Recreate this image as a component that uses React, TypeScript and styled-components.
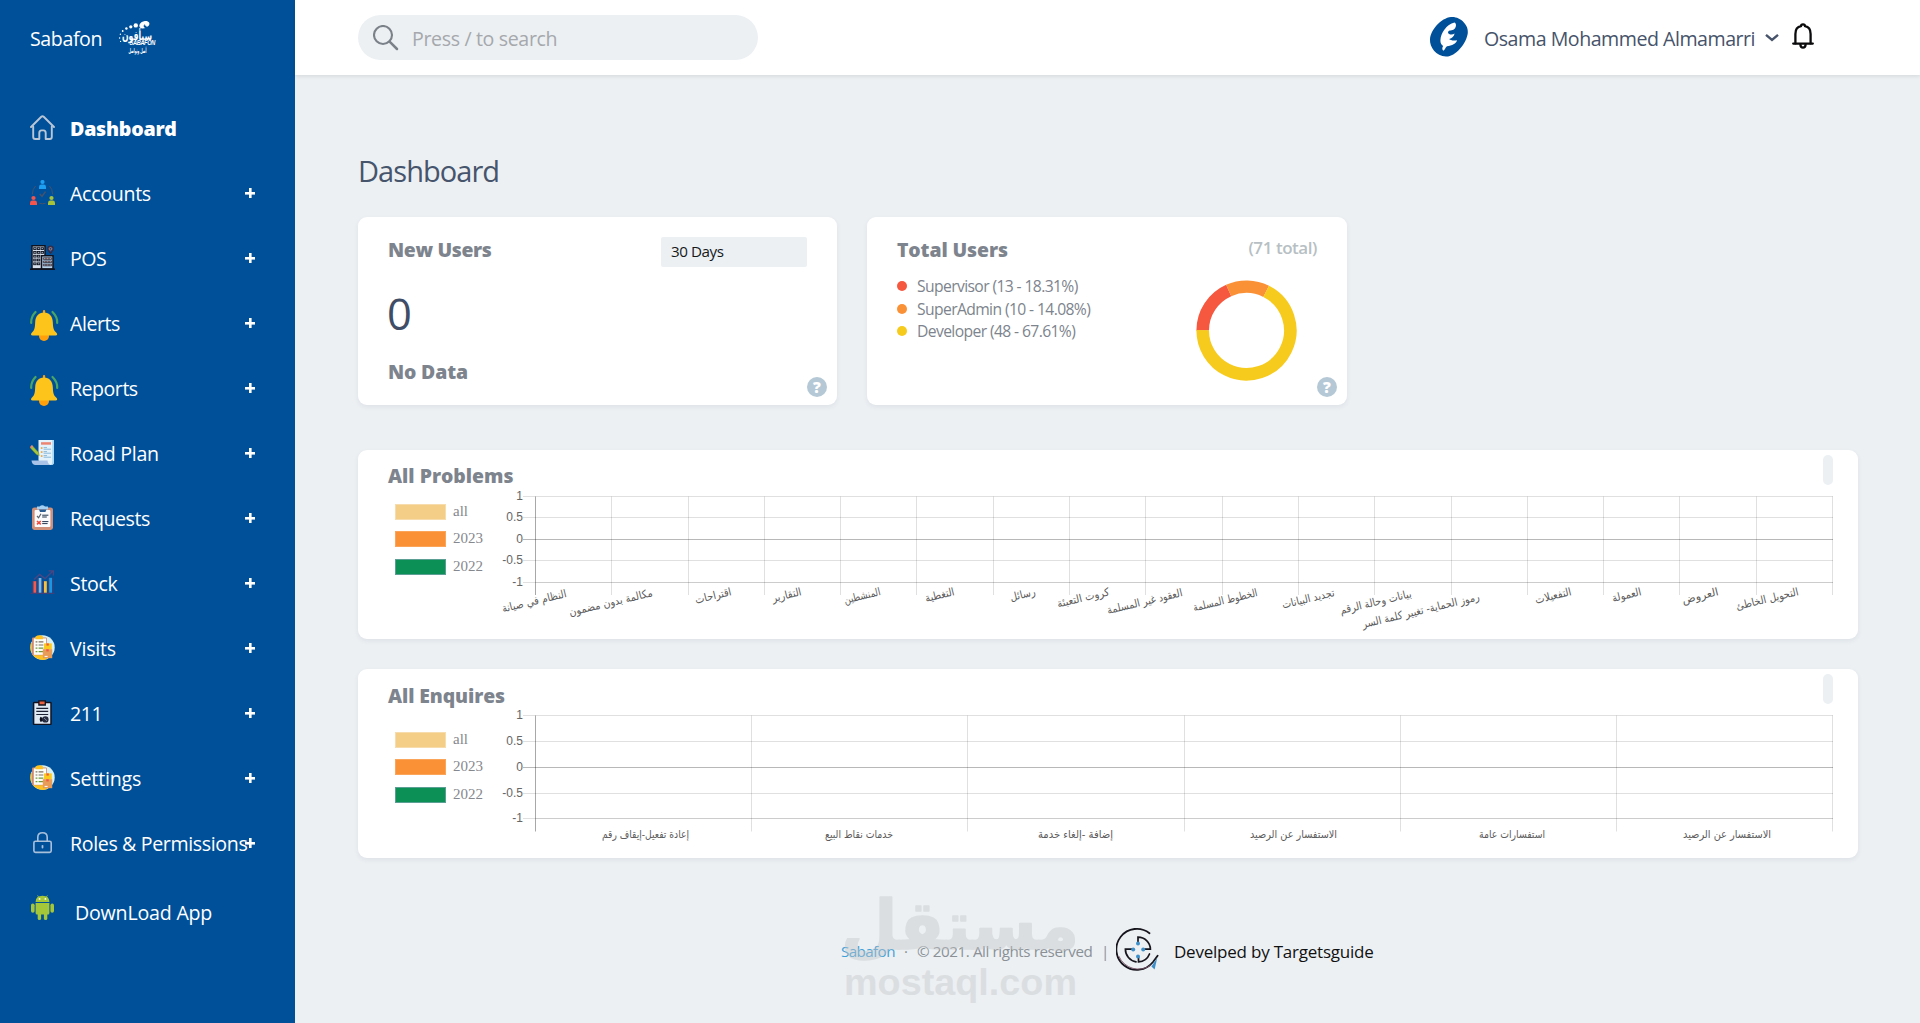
import React from "react";
import styled, { createGlobalStyle } from "styled-components";

const GlobalStyle = createGlobalStyle`
  *, *::before { box-sizing: border-box; }
  body { margin: 0; background: #ecf0f3; font-family: "Open Sans", "Noto Sans", sans-serif; }
`;

/* ---------- shell ---------- */

const Shell = styled.div`
  display: flex;
  width: 1920px;
  height: 1023px;
  overflow: hidden;
  background: #ecf0f3;
`;

const Sidebar = styled.aside`
  width: 295px;
  flex: none;
  background: #005099;
  color: #fff;
  padding: 0 40px 0 30px;
`;

const Brand = styled.div`
  display: flex;
  height: 115px;
  padding-top: 18px;
  gap: 16px;
  font-size: 19.6px;
  line-height: 42px;
  letter-spacing: -0.4px;
  svg { overflow: visible; }
`;

const Menu = styled.nav`
  display: flex;
  flex-direction: column;
  gap: 40px;
`;

const MenuRow = styled.a`
  display: flex;
  align-items: flex-start;
  height: 25px;
  color: #fff;
`;

const IconSlot = styled.span`
  flex: none;
  width: 40px;
  height: 25px;
  svg { display: block; }
`;

const MenuLabel = styled.span<{ $track?: number; $strong?: boolean; $shift?: boolean }>`
  flex: 1;
  min-width: 0;
  white-space: nowrap;
  font-size: 19.6px;
  font-weight: ${(p) => (p.$strong ? 800 : 400)};
  line-height: ${(p) => (p.$strong ? 28 : 27)}px;
  letter-spacing: ${(p) => p.$track ?? -0.4}px;
  padding: ${(p) => (p.$shift ? "4px 0 0 5px" : "0")};
`;

const PlusMark = styled.span`
  flex: none;
  width: 10px;
  height: 10px;
  margin-top: 8px;
  background:
    linear-gradient(#fff, #fff) center / 10px 2.6px no-repeat,
    linear-gradient(#fff, #fff) center / 2.6px 10px no-repeat;
`;

const Main = styled.div`
  flex: 1;
  display: flex;
  flex-direction: column;
`;

const TopBar = styled.header`
  display: flex;
  align-items: flex-start;
  height: 75px;
  flex: none;
  padding: 15px 106px 0 63px;
  background: #fff;
  box-shadow: 0 1px 4px rgba(30, 30, 30, 0.12);
`;

const SearchBox = styled.label`
  display: flex;
  width: 400px;
  height: 45px;
  border-radius: 23px;
  background: #ecf0f3;
  padding: 10px 15px;
  gap: 13px;
`;

const SearchInput = styled.input`
  border: 0;
  background: none;
  outline: 0;
  padding: 0;
  margin-top: 1px;
  width: 300px;
  height: 26px;
  font: 400 19.6px/26px "Open Sans", sans-serif;
  letter-spacing: -0.36px;
  &::placeholder { color: #a5a8ac; opacity: 1; }
`;

const Account = styled.div`
  display: flex;
  align-items: flex-start;
  margin-left: auto;
  svg { display: block; }
`;

const AvatarSlot = styled.span`
  padding-top: 1px;
`;

const AccountName = styled.span`
  width: 270px;
  margin: 10px 11px 0 15px;
  color: #46536a;
  font-size: 19.6px;
  line-height: 28px;
  letter-spacing: -0.48px;
  white-space: nowrap;
`;

const BellSlot = styled.span`
  margin-left: 13px;
  padding-top: 8px;
`;

const ChevronSlot = styled.span`
  padding-top: 18px;
`;

/* ---------- content ---------- */

const Content = styled.main`
  display: flex;
  flex-direction: column;
  padding: 75px 62px 0 63px;
`;

const PageTitle = styled.h1`
  margin: 0;
  height: 67px;
  color: #46546c;
  font-size: 29px;
  font-weight: 400;
  line-height: 42px;
  letter-spacing: -0.95px;
`;

const StatRow = styled.section`
  display: grid;
  grid-template-columns: 479px 480px;
  gap: 30px;
  margin-bottom: 45px;
`;

const Card = styled.article`
  position: relative;
  height: 188px;
  border-radius: 9px;
  background: #fff;
  box-shadow: 0 2px 5px rgba(40, 60, 80, 0.07);
`;

const StatCard = styled(Card)`
  padding: 20px 30px;
`;

const CardHead = styled.div`
  display: flex;
  justify-content: space-between;
  align-items: flex-start;
`;

const CardTitle = styled.h2<{ $track?: number }>`
  margin: 0;
  color: #7d848d;
  font-size: 19.4px;
  font-weight: 800;
  line-height: 26px;
  letter-spacing: ${(p) => p.$track ?? -0.3}px;
  white-space: nowrap;
`;

const PeriodSelect = styled.div`
  width: 146px;
  height: 30px;
  border-radius: 2px;
  background: #ecf0f3;
  padding-left: 10px;
  color: #16181c;
  font-size: 15.2px;
  line-height: 29px;
  letter-spacing: -0.45px;
`;

const BigNumber = styled.div`
  height: 60px;
  margin: 20px 0 12px;
  color: #3f4d66;
  font-size: 43.5px;
  font-weight: 400;
  line-height: 54px;
  text-indent: -1px;
`;

const HelpBadge = styled.span`
  position: absolute;
  right: 10px;
  bottom: 8px;
  width: 20px;
  height: 20px;
  border-radius: 50%;
  background: #b5c8d6;
  color: #fff;
  font-size: 15.5px;
  font-weight: 800;
  line-height: 20px;
  text-align: center;
`;

const TotalNote = styled.span`
  margin: -2px 0 0;
  color: #b7bfc4;
  font-size: 17px;
  font-weight: 600;
  line-height: 26px;
  letter-spacing: -0.45px;
`;

const TotalBody = styled.div`
  display: flex;
  justify-content: space-between;
`;

const RoleList = styled.ul`
  list-style: none;
  margin: 12px 0 0;
  padding: 0;
`;

const RoleItem = styled.li<{ $color: string }>`
  display: flex;
  align-items: center;
  gap: 10px;
  height: 22.5px;
  color: #7d848d;
  font-size: 15.7px;
  letter-spacing: -0.62px;
  white-space: nowrap;
  &::before {
    content: "";
    width: 10px;
    height: 10px;
    border-radius: 50%;
    background: ${(p) => p.$color};
  }
`;

const DonutSlot = styled.div`
  margin: 17px 20px 0 0;
  svg { display: block; }
`;

const ChartCard = styled(Card)`
  height: 189px;
  margin-bottom: 30px;
  padding-left: 30px;
`;

const ChartHead = styled.div<{ $drop: number }>`
  display: flex;
  justify-content: space-between;
  height: 38px;
  padding: 5px 25px 0 0;
  h2 { padding-top: ${(p) => 8 + p.$drop}px; }
`;

const Pill = styled.span`
  width: 10px;
  height: 30px;
  border-radius: 5px;
  background: #ecf0f3;
`;

const ChartBody = styled.div`
  display: flex;
  svg { display: block; }
`;

const Legend = styled.ul<{ $top: number }>`
  list-style: none;
  width: 103px;
  margin: 0;
  padding: ${(p) => p.$top}px 0 0 7px;
`;

const LegendItem = styled.li<{ $color: string; $edge: string }>`
  display: flex;
  align-items: center;
  gap: 7px;
  height: 27.5px;
  color: #85888e;
  font: 15px/16px "Liberation Serif", serif;
  &::before {
    content: "";
    width: 51px;
    height: 16px;
    background: ${(p) => p.$color};
    border: 1px solid ${(p) => p.$edge};
  }
  span { margin-top: -2px; }
`;

/* ---------- footer ---------- */

const Footer = styled.footer`
  position: relative;
  display: flex;
  align-items: center;
  height: 46px;
  margin: 38px 0 0 483px;
  font-size: 15.2px;
  color: #8a9096;
  white-space: nowrap;
  > a, > span { padding-top: 4px; }
`;

const FooterBrand = styled.a`
  width: 54px;
  color: #3f9fd8;
  letter-spacing: -0.6px;
`;

const FooterDot = styled.span`
  width: 22px;
  text-align: center;
`;

const FooterText = styled.span`
  width: 184px;
  letter-spacing: -0.42px;
`;

const FooterBar = styled.span`
  width: 15px;
`;

const FooterCredit = styled.span`
  margin-left: 14px;
  color: #111;
  font-size: 17px;
  letter-spacing: -0.22px;
`;

const Watermark = styled.div`
  position: absolute;
  left: -20px;
  top: -66px;
  pointer-events: none;
  svg { display: block; overflow: visible; }
`;

/* ---------- icons ---------- */

const HomeIcon = () => (
  <svg width="25" height="25" viewBox="0 0 25 25" fill="none" stroke="#b9c6d6" strokeWidth="1.9" strokeLinecap="round" strokeLinejoin="round">
    <path d="M1 12 L11.3 1.8 Q12.5 .7 13.7 1.8 L24 12" />
    <path d="M3.2 11.5 V22 Q3.2 24 5.2 24 H9.3 V18 Q9.3 15.4 11.5 15.4 H13.5 Q15.7 15.4 15.7 18 V24 H19.8 Q21.8 24 21.8 22 V11.5" />
  </svg>
);

const Person = ({ x, y, color }: { x: number; y: number; color: string }) => (
  <g fill={color} transform={`translate(${x} ${y})`}>
    <circle cx="3.5" cy="2" r="2.1" />
    <path d="M0 9 V7 Q0 4.6 2.4 4.6 H4.6 Q7 4.6 7 7 V9 Z" />
  </g>
);

const AccountsIcon = () => (
  <svg width="25" height="25" viewBox="0 0 25 25">
    <Person x={9} y={0} color="#1ea0f2" />
    <Person x={0} y={16} color="#f4544c" />
    <Person x={18} y={16} color="#a6c23a" />
    <g fill="none" stroke="#46536b" strokeWidth="1">
      <path d="M5.5 6 Q2.5 9 2.3 14.5 M19.5 6 Q22.5 9 22.7 14.5 M9.5 23.3 Q12.5 24.3 15.5 23.3" />
      <path d="M9.8 14 L12 16.4 L15.5 11.6" strokeWidth="1.5" />
    </g>
  </svg>
);

const BuildingIcon = () => (
  <svg width="25" height="25" viewBox="0 0 25 25">
    <path d="M2 .8 H15 V24 H2 Z" fill="#d5deea" stroke="#10131f" strokeWidth="1.5" />
    <path d="M11.5 10.8 H23 V24 H11.5 Z" fill="#b8d2ea" stroke="#10131f" strokeWidth="1.5" />
    {[2.7, 6.5, 10.3, 14.1, 17.9].map((y) => (
      <g key={y} fill="#a9b9cd" stroke="#10131f" strokeWidth=".9">
        <rect x="3.7" y={y} width="2.4" height="1.8" />
        <rect x="7.4" y={y} width="2.4" height="1.8" />
        {y < 10 && <rect x="11.1" y={y} width="2.4" height="1.8" />}
      </g>
    ))}
    {[12.8, 16, 19.2].map((y) => (
      <path key={y} d={`M13.3 ${y} h8.4 v1.6 h-8.4 z M16 ${y} v1.6 M19 ${y} v1.6`} fill="#e9c3bd" stroke="#222738" strokeWidth=".8" />
    ))}
    <path d="M0 24.2 H25" stroke="#10131f" strokeWidth="1.6" />
    <path d="M20.5 8.3 L18 5 Q16.9 1.2 20.5 1 Q24.1 1.2 23 5 Z" fill="#23458a" stroke="#3a2a3c" strokeWidth="1.2" />
    <circle cx="20.5" cy="3.8" r="1.3" fill="#005099" stroke="#d07a4c" strokeWidth=".9" />
  </svg>
);

const RingingBell = () => (
  <svg width="29" height="31" viewBox="0 0 29 31">
    <path d="M5.5 2 Q.8 7 1.2 13" fill="none" stroke="#4aa564" strokeWidth="2.2" strokeLinecap="round" />
    <path d="M22.5 2 Q27.6 7 27.2 13" fill="none" stroke="#4aa564" strokeWidth="2.2" strokeLinecap="round" />
    <circle cx="14" cy="26" r="5" fill="#ff9f0a" />
    <rect x="12.9" y="0" width="2.3" height="4.5" rx="1.1" fill="#ff9f0a" />
    <path d="M14 2.4 C19.5 2.4 22.6 6.2 22.8 12 C23 18 23.7 20.5 26.4 22.7 C27.8 24.2 27.2 25.5 25.6 25.5 H2.6 C1 25.5 .4 24.2 1.8 22.7 C4.4 20.5 5 18 5.2 12 C5.4 6.2 8.5 2.4 14 2.4 Z" fill="#fdc51b" />
  </svg>
);

const PlanIcon = () => (
  <svg width="25" height="25" viewBox="0 0 25 25">
    <path d="M8.5 0 H24 V22 Q24 25 21 25 H10 L8.5 20 Z" fill="#e4f3fb" />
    <path d="M22.2 0 H24 V22 Q24 25 21 25 Q22.2 24 22.2 21 Z" fill="#a9d8f5" />
    <path d="M1.5 20.5 H17.5 Q17.8 24.2 21 25 H5 Q2 24.5 1.5 20.5 Z" fill="#a9c3e8" />
    <path d="M11 2.2 H21 V4.7 H11 Z" fill="#ec8472" />
    {[8, 12, 16].map((y) => (
      <g key={y}>
        <rect x="10.8" y={y - 0.8} width="1.7" height="1.7" fill="#f0a23d" />
        <path d={`M13.6 ${y - 0.4} H17 M13.6 ${y + 1.2} H21`} stroke="#7fb2d6" strokeWidth=".9" />
      </g>
    ))}
    <path d="M2.2 5.6 L8.6 12.6 L9.2 15.6 L6.4 14.6 L.2 7.8 Z" fill="#a4c43b" stroke="#6c8f35" strokeWidth=".5" />
    <path d="M1.8 5 L3.2 6.6 L1.4 8.6 L0 7 Z" fill="#ec8472" />
  </svg>
);

const RequestsIcon = () => (
  <svg width="25" height="25" viewBox="0 0 25 25">
    <rect x="2" y="2.4" width="21" height="22.6" rx="2.4" fill="#d08f78" />
    <rect x="4.6" y="5" width="15.8" height="17" rx="1" fill="#fbfbfd" />
    <path d="M7 1.4 H9.5 Q12.3 -1 15 1.4 H18 V4.5 H7 Z" fill="#a5d0f4" />
    <path d="M9 4.6 H16.5 L15.4 7 H10 Z" fill="#2c5d92" />
    <path d="M7 11 L8.6 12.8 L11 8.8" fill="none" stroke="#5c636e" strokeWidth="1.2" />
    <path d="M7 16 L10.8 19.4 M10.8 16 L7 19.4" stroke="#ee4b3e" strokeWidth="1.6" />
    <path d="M12.2 10.2 H18.4 M12.2 12 H16.8 M12.2 16.6 H18.4 M12.2 18.6 H17.6" stroke="#23364f" strokeWidth="1" />
  </svg>
);

const StockIcon = () => (
  <svg width="25" height="25" viewBox="0 0 25 25">
    <rect x="3.4" y="11.2" width="2.8" height="11.6" fill="#f3594c" />
    <rect x="8.6" y="8" width="2.8" height="14.8" fill="#7eb6e6" />
    <rect x="14" y="11.2" width="2.8" height="11.6" fill="#fbc13a" />
    <rect x="19.2" y="7.8" width="2.8" height="15" fill="#1698e6" />
    <path d="M.5 23.4 H24.5 M2.6 23 V11 M7.8 23 V8 M13.2 23 V11 M18.4 23 V8 M22.8 23 V8" stroke="#473f76" strokeWidth="1" fill="none" />
    <path d="M4 9.6 L9.6 4.4 L15 8.6 L23 1 M18.6 .9 H23.4 V5.4" fill="none" stroke="#4a4682" strokeWidth="1.3" />
  </svg>
);

const VisitsIcon = () => (
  <svg width="25" height="25" viewBox="0 0 25 25">
    <circle cx="12.5" cy="12.5" r="12.2" fill="#d6f0f5" />
    <path d="M1 8 Q-1 19 7 23.5 Q12 26 17.5 24 L15 8 Z" fill="#fbc220" />
    <rect x="2" y="2.4" width="14.8" height="17.8" rx="1" fill="#d0896e" />
    <rect x="3.8" y="3.4" width="12.2" height="16.4" fill="#fdfdf8" />
    <path d="M5.5 1.4 Q9.3 -1 13 1.4 V4.2 H5.5 Z" fill="#fbc220" />
    {[6.8, 10, 13.2, 16.6].map((y) => (
      <path key={y} d={`M5.6 ${y} H7.4 M8.6 ${y} H13.4`} stroke={y > 12 ? "#6f9838" : "#7d7160"} strokeWidth="1.2" />
    ))}
    <rect x="14" y="8.4" width="7.8" height="6.2" fill="#fccb20" />
    <path d="M16.4 8.4 h2.4 v2.2 h-2.4 z" fill="#f0583e" />
    <rect x="12.8" y="14.2" width="9.4" height="9" fill="#e99b58" />
    <path d="M16.3 14.2 h2.4 v2.2 h-2.4 z" fill="#f0583e" />
    <path d="M14.6 21.4 h3" stroke="#fff" strokeWidth="1" />
  </svg>
);

const ClipboardIcon = () => (
  <svg width="25" height="25" viewBox="0 0 25 25">
    <rect x="3.6" y="2.6" width="17.4" height="21.8" rx=".6" fill="#dfe9f4" stroke="#10131f" strokeWidth="1.5" />
    <path d="M8.9 .8 H15.3 V5 H8.9 Z" fill="#e8603f" stroke="#10131f" strokeWidth="1.3" />
    <path d="M6.3 8.3 H18.2 M6.3 11.4 H18.2 M6.3 14.5 H18.2" stroke="#1c2233" strokeWidth="1.2" />
    <path d="M10.6 16.8 Q8.8 19.2 10.6 22 L13.2 20.8 L12.6 18 Z" fill="#10131f" />
    <circle cx="15.4" cy="19.4" r="3.2" fill="#262c40" />
    <path d="M14 18 L17 20.8" stroke="#8fa0b8" strokeWidth=".8" />
  </svg>
);

const LockIcon = () => (
  <svg width="25" height="25" viewBox="0 0 25 25" fill="none" stroke="#a9c0da" strokeWidth="1.6" strokeLinecap="round">
    <rect x="3.9" y="11.2" width="17.3" height="11.2" rx="1.6" />
    <path d="M7.8 11 V7.3 Q7.8 2.8 12.5 2.8 Q17.2 2.8 17.2 7.3 V11" />
    <path d="M12.5 15.8 V17.6" strokeWidth="1.8" />
  </svg>
);

const AndroidIcon = () => (
  <svg width="25" height="25" viewBox="0 0 25 25" fill="#a4c639">
    <path d="M5.6 7 Q5.6 .8 12.5 .8 Q19.4 .8 19.4 7 Z" />
    <path d="M7.6 .4 L9 2.6 M17.4 .4 L16 2.6" stroke="#a4c639" strokeWidth=".8" />
    <circle cx="9.6" cy="3.9" r=".9" fill="#fff" />
    <circle cx="15.4" cy="3.9" r=".9" fill="#fff" />
    <path d="M5.6 8 H19.4 V18 Q19.4 19.5 18 19.5 H7 Q5.6 19.5 5.6 18 Z" />
    <rect x="1" y="8.4" width="3.6" height="9.4" rx="1.8" />
    <rect x="20.4" y="8.4" width="3.6" height="9.4" rx="1.8" />
    <rect x="7.7" y="17" width="3.4" height="8" rx="1.6" />
    <rect x="13.9" y="17" width="3.4" height="8" rx="1.6" />
  </svg>
);

const SearchIcon = () => (
  <svg width="26" height="26" viewBox="0 0 26 26" fill="none" stroke="#7b8188" strokeWidth="2.1" strokeLinecap="round">
    <circle cx="10" cy="10" r="9" />
    <path d="M16.6 16.6 L24 24" strokeWidth="2.5" />
  </svg>
);

const BrandMark = () => (
  <svg width="40" height="38" viewBox="0 0 40 38" fill="#fff">
    <path d="M26 3.2 C30 2 33 5 30.6 7.8 C29.2 9.5 27.6 8.8 28.2 7.6 C26.6 8.2 26 6.8 27.5 6 C25.2 6.4 25 9.6 27.6 10 C23 11.4 20.8 9.4 21.4 7 C22 5 23.8 3.8 26 3.2 Z" />
    <circle cx="17.8" cy="7.4" r="2.2" />
    <circle cx="12.8" cy="8.8" r="1.6" />
    <circle cx="8.4" cy="10.5" r="1.2" />
    <circle cx="4.7" cy="13" r=".9" />
    <circle cx="2.4" cy="16.3" r=".7" />
    <circle cx="1.6" cy="20" r=".7" />
    <circle cx="2.6" cy="23.4" r=".6" />
    <text x="4" y="21.5" fontFamily="DejaVu Sans" fontWeight="700" fontSize="12" textLength="30" lengthAdjust="spacingAndGlyphs">سبأفون</text>
    <text x="11.5" y="26.8" fontFamily="Liberation Sans" fontStyle="italic" fontWeight="700" fontSize="6.4" textLength="25.5" lengthAdjust="spacingAndGlyphs">SABAFON</text>
    <text x="10.5" y="34.8" fontFamily="DejaVu Sans" fontWeight="700" fontSize="6.5" textLength="18" lengthAdjust="spacingAndGlyphs">أصل وتواصل</text>
  </svg>
);

const Avatar = () => (
  <svg width="40" height="42" viewBox="0 0 40 42">
    <path d="M22 1 C31 0 40 9 38.8 17 C37.5 28 26 41 17 40.6 C7 40 .5 31 1 23.5 C1.5 14 12 2 22 1 Z" fill="#005099" />
    <path d="M25.5 6.5 C17.5 8.5 11.6 17 11.4 24.2 C11.3 27 12.4 29 14.2 30 C13.2 31.4 12.8 33.2 14.2 34.8 C15.8 34 16.4 31.4 18 30.2 C22.8 29.8 27.4 27.4 28 24.2 C24.6 24.8 21.4 24.4 20.2 23 C23 22.4 25 20.6 25.6 17.6 C23.4 19 19.4 18.8 19 16.4 C19.2 14.2 22 14.8 24.4 13.8 C27.2 12.2 28 7.6 25.5 6.5 Z" fill="#fff" />
  </svg>
);

const ChevronIcon = () => (
  <svg width="14" height="10" viewBox="0 0 14 10" fill="none" stroke="#46536a" strokeWidth="2.4">
    <path d="M1 1.8 L7 7 L13 1.8" />
  </svg>
);

const NotifyIcon = () => (
  <svg width="22" height="27" viewBox="0 0 22 27" fill="none" stroke="#0b0b0d" strokeWidth="2.3" strokeLinecap="round" strokeLinejoin="round">
    <path d="M1.2 20.6 H20.8" />
    <path d="M3.4 20.4 V11 Q3.4 4 9 3.2 Q9 1.4 11 1.4 Q13 1.4 13 3.2 Q18.6 4 18.6 11 V20.4" />
    <path d="M8.4 21.6 Q8.6 24.6 11 24.6 Q13.4 24.6 13.6 21.6" />
  </svg>
);

const TargetMark = () => (
  <svg width="44" height="46" viewBox="0 0 44 46" fill="none" strokeLinecap="round">
    <path d="M33.5 7.2 A20.5 20.5 0 1 0 37 36 L41.6 29.8" stroke="#17151d" strokeWidth="1.8" />
    <path d="M3 30.5 A21 21 0 0 0 35 39" stroke="#7a5468" strokeWidth=".9" />
    <path d="M22 17 V11.2 A12.4 12.4 0 0 1 34.4 23.2 H29" stroke="#17151d" strokeWidth="1.7" />
    <path d="M33.5 28 A12.4 12.4 0 0 1 22.5 35.8 V31 M17 23.2 H9.4 A12.8 12.8 0 0 0 20 35.8" stroke="#17151d" strokeWidth="1.7" />
    <g fill="#3c8fc9">
      <circle cx="22" cy="17.4" r="2" />
      <circle cx="17.2" cy="23.4" r="2" />
      <circle cx="27.2" cy="23.4" r="2" />
      <circle cx="22" cy="30.4" r="2" />
      <path d="M41.2 32 L38.6 43.5 L35.4 40.5 Z" />
    </g>
  </svg>
);

/* ---------- charts ---------- */

const roles = [
  { label: "Supervisor (13 - 18.31%)", share: 13 / 71, color: "#f6573f" },
  { label: "SuperAdmin (10 - 14.08%)", share: 10 / 71, color: "#fb9137" },
  { label: "Developer (48 - 67.61%)", share: 48 / 71, color: "#f6cb1e" },
];

const Donut = () => {
  const r = 43.8;
  const c = 2 * Math.PI * r;
  let offset = 0;
  return (
    <svg width="101" height="101" viewBox="0 0 101 101">
      {roles.map((role) => {
        const start = offset;
        offset += role.share;
        return (
          <circle
            key={role.label}
            cx="50.5"
            cy="50.5"
            r={r}
            fill="none"
            stroke={role.color}
            strokeWidth="12.6"
            strokeDasharray={`${role.share * c} ${c}`}
            transform={`rotate(${180 + start * 360} 50.5 50.5)`}
          />
        );
      })}
    </svg>
  );
};

type AxisLabel = { text: string; left: number; right: number; y: number };

type PlotProps = {
  columns: number;
  rows: number[];
  bottom: number;
  tilt: number;
  labels: AxisLabel[];
};

const PLOT_LEFT = 44.5;
const PLOT_RIGHT = 1341.5;
const ticks = ["1", "0.5", "0", "-0.5", "-1"];

const Plot = ({ columns, rows, bottom, tilt, labels }: PlotProps) => {
  const step = (PLOT_RIGHT - PLOT_LEFT) / columns;
  const cos = Math.cos((tilt * Math.PI) / 180);
  return (
    <svg width="1346" height="150" viewBox="0 0 1346 150">
      {rows.map((y, i) => (
        <g key={y}>
          <path d={`M32 ${y} H${PLOT_RIGHT + 0.5}`} stroke="#000" strokeOpacity={i === 2 ? 0.28 : i === 4 ? 0.2 : 0.12} />
          {i === 4 && <path d={`M32 ${y} H${PLOT_LEFT}`} stroke="#fff" strokeOpacity=".4" />}
          <text x="32" y={y + 3.8} textAnchor="end" fontFamily="Liberation Sans, Arial, sans-serif" fontSize="12" fill="#666">
            {ticks[i]}
          </text>
        </g>
      ))}
      {Array.from({ length: columns + 1 }, (_, i) => {
        const x = Math.floor(PLOT_LEFT + i * step) + 0.5;
        return <path key={i} d={`M${x} ${rows[0]} V${bottom}`} stroke="#000" strokeOpacity={i === 0 ? 0.34 : 0.12} />;
      })}
      {labels.map((l, i) => (
        <text
          key={i}
          transform={`translate(${l.right} ${l.y}) rotate(${-tilt})`}
          textAnchor="end"
          fontFamily="DejaVu Sans, sans-serif"
          fontSize="11"
          fill="#5c5c5c"
          textLength={(l.right - l.left) / cos}
          lengthAdjust="spacingAndGlyphs"
        >
          {l.text}
        </text>
      ))}
    </svg>
  );
};

const problemLabels: AxisLabel[] = [
  { text: "النظام في صيانة", left: 12, right: 76, y: 109 },
  { text: "مكالمة بدون مضمون", left: 79, right: 162, y: 108 },
  { text: "اقتراحات", left: 205, right: 241, y: 107 },
  { text: "التقارير", left: 282, right: 311, y: 107 },
  { text: "المنشطين", left: 354, right: 390, y: 107 },
  { text: "التغطية", left: 435, right: 464, y: 107 },
  { text: "رسائل", left: 520, right: 545, y: 107 },
  { text: "كروت التعبئة", left: 567, right: 619, y: 107 },
  { text: "العقود غير المسلمة", left: 617, right: 692, y: 108 },
  { text: "الخطوط المسلمة", left: 703, right: 767, y: 108 },
  { text: "تجديد البيانات", left: 792, right: 844, y: 108 },
  { text: "بيانات وحالة الرقم", left: 850, right: 921, y: 109 },
  { text: "رموز الحماية- تغيير كلمة السر", left: 872, right: 989, y: 112 },
  { text: "التفعيلات", left: 1045, right: 1081, y: 107 },
  { text: "العمولة", left: 1122, right: 1151, y: 107 },
  { text: "العروض", left: 1192, right: 1228, y: 107 },
  { text: "التحويل الخاطئ", left: 1246, right: 1308, y: 107 },
];

const enquiryLabels: AxisLabel[] = [
  { text: "إعادة تفعيل-إيقاف رقم", left: 111, right: 198, y: 131 },
  { text: "خدمات نقاط البيع", left: 334, right: 402, y: 131 },
  { text: "إضافة -إلغاء خدمة", left: 547, right: 622, y: 131 },
  { text: "الاستفسار عن الرصيد", left: 759, right: 846, y: 131 },
  { text: "استفسارات عامة", left: 988, right: 1054, y: 131 },
  { text: "الاستفسار عن الرصيد", left: 1192, right: 1280, y: 131 },
];

const series = [
  { name: "all", color: "#f4cd86", edge: "#f7dcae" },
  { name: "2023", color: "#fb9137", edge: "#fba55b" },
  { name: "2022", color: "#0c9056", edge: "#5b9f94" },
];

type PanelProps = { title: string; legendTop: number; track: number; drop?: number; plot: PlotProps };

const ChartPanel = ({ title, legendTop, track, drop = 0, plot }: PanelProps) => (
  <ChartCard>
    <ChartHead $drop={drop}>
      <CardTitle $track={track}>{title}</CardTitle>
      <Pill />
    </ChartHead>
    <ChartBody>
      <Legend $top={legendTop}>
        {series.map((s) => (
          <LegendItem key={s.name} $color={s.color} $edge={s.edge}>
            <span>{s.name}</span>
          </LegendItem>
        ))}
      </Legend>
      <Plot {...plot} />
    </ChartBody>
  </ChartCard>
);

/* ---------- page ---------- */

const menu = [
  { label: "Accounts", icon: <AccountsIcon />, track: -0.3 },
  { label: "POS", icon: <BuildingIcon />, track: -0.5 },
  { label: "Alerts", icon: <RingingBell />, track: -0.45 },
  { label: "Reports", icon: <RingingBell />, track: -0.5 },
  { label: "Road Plan", icon: <PlanIcon />, track: -0.3 },
  { label: "Requests", icon: <RequestsIcon />, track: -0.5 },
  { label: "Stock", icon: <StockIcon />, track: -0.35 },
  { label: "Visits", icon: <VisitsIcon />, track: -0.25 },
  { label: "211", icon: <ClipboardIcon />, track: -0.5 },
  { label: "Settings", icon: <VisitsIcon />, track: -0.2 },
  { label: "Roles & Permissions", icon: <LockIcon />, track: -0.36 },
];

export default function App() {
  return (
    <>
      <GlobalStyle />
      <Shell>
        <Sidebar>
          <Brand>
            <span>Sabafon</span>
            <BrandMark />
          </Brand>
          <Menu>
            <MenuRow>
              <IconSlot><HomeIcon /></IconSlot>
              <MenuLabel $strong $track={-0.25}>Dashboard</MenuLabel>
            </MenuRow>
            {menu.map((m) => (
              <MenuRow key={m.label}>
                <IconSlot>{m.icon}</IconSlot>
                <MenuLabel $track={m.track}>{m.label}</MenuLabel>
                <PlusMark />
              </MenuRow>
            ))}
            <MenuRow>
              <IconSlot><AndroidIcon /></IconSlot>
              <MenuLabel $shift $track={-0.2}>DownLoad App</MenuLabel>
            </MenuRow>
          </Menu>
        </Sidebar>
        <Main>
          <TopBar>
            <SearchBox>
              <SearchIcon />
              <SearchInput placeholder="Press / to search" />
            </SearchBox>
            <Account>
              <AvatarSlot><Avatar /></AvatarSlot>
              <AccountName>Osama Mohammed Almamarri</AccountName>
              <ChevronSlot><ChevronIcon /></ChevronSlot>
              <BellSlot><NotifyIcon /></BellSlot>
            </Account>
          </TopBar>
          <Content>
            <PageTitle>Dashboard</PageTitle>
            <StatRow>
              <StatCard>
                <CardHead>
                  <CardTitle $track={-0.35}>New Users</CardTitle>
                  <PeriodSelect>30 Days</PeriodSelect>
                </CardHead>
                <BigNumber>0</BigNumber>
                <CardTitle $track={-0.15}>No Data</CardTitle>
                <HelpBadge>?</HelpBadge>
              </StatCard>
              <StatCard>
                <CardHead>
                  <CardTitle $track={-0.1}>Total Users</CardTitle>
                  <TotalNote>(71 total)</TotalNote>
                </CardHead>
                <TotalBody>
                  <RoleList>
                    {roles.map((r) => (
                      <RoleItem key={r.label} $color={r.color}>{r.label}</RoleItem>
                    ))}
                  </RoleList>
                  <DonutSlot><Donut /></DonutSlot>
                </TotalBody>
                <HelpBadge>?</HelpBadge>
              </StatCard>
            </StatRow>
            <ChartPanel
              title="All Problems"
              legendTop={10}
              track={0}
              plot={{ columns: 17, rows: [8.5, 29.5, 51.5, 72.5, 94.5], bottom: 107, tilt: 13.5, labels: problemLabels }}
            />
            <ChartPanel
              title="All Enquires"
              legendTop={19}
              track={-0.1}
              drop={1}
              plot={{ columns: 6, rows: [8.5, 34.5, 60.5, 86.5, 111.5], bottom: 124.5, tilt: 0, labels: enquiryLabels }}
            />
            <Footer>
              <FooterBrand>Sabafon</FooterBrand>
              <FooterDot>·</FooterDot>
              <FooterText>© 2021. All rights reserved</FooterText>
              <FooterBar>|</FooterBar>
              <TargetMark />
              <FooterCredit>Develped by Targetsguide</FooterCredit>
              <Watermark>
                <svg width="270" height="150" viewBox="0 0 270 150" fill="#c4c6c8" opacity=".42">
                  <text x="20" y="89" fontFamily="DejaVu Sans" fontWeight="700" fontSize="68" textLength="238" lengthAdjust="spacingAndGlyphs" stroke="#c4c6c8" strokeWidth="1.6" strokeLinejoin="round">مستقل</text>
                  <text x="23" y="135" fontFamily="Liberation Sans" fontWeight="700" fontSize="36" textLength="233" lengthAdjust="spacingAndGlyphs">mostaql.com</text>
                </svg>
              </Watermark>
            </Footer>
          </Content>
        </Main>
      </Shell>
    </>
  );
}
